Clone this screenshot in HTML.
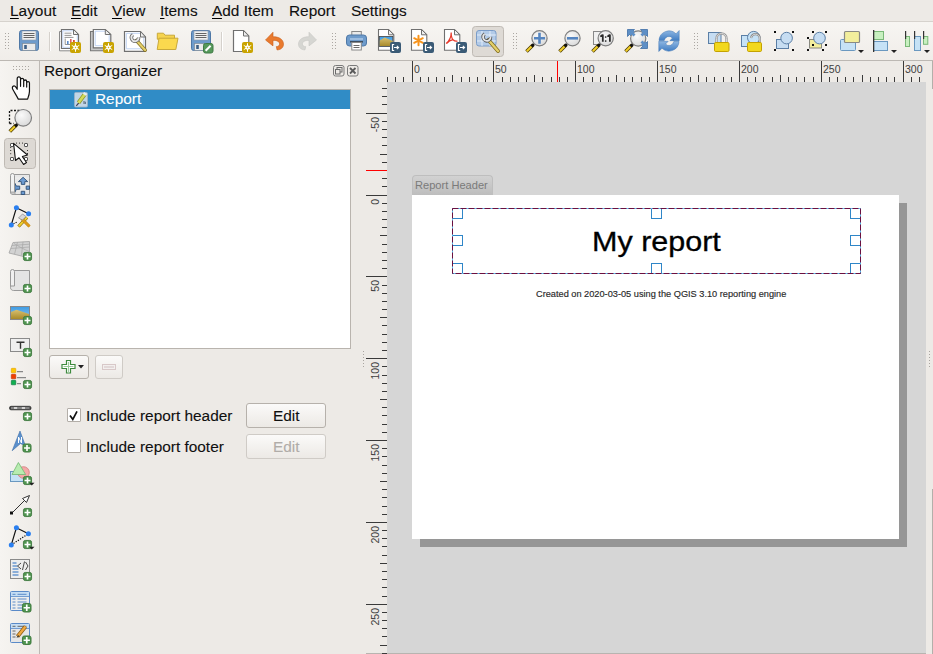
<!DOCTYPE html>
<html><head><meta charset="utf-8">
<style>
*{margin:0;padding:0;box-sizing:border-box}
html,body{width:933px;height:654px;overflow:hidden;background:#EDEAE6;font-family:"Liberation Sans",sans-serif;color:#1a1a1a}
.a{position:absolute}
#menubar{left:0;top:0;width:933px;height:21px;background:#EDEAE6}
#menuline{left:0;top:21px;width:933px;height:1px;background:#D6D2CD}
#toolbar{left:0;top:22px;width:933px;height:38px;background:linear-gradient(#F7F5F2,#F0EDE9)}
#tbline{left:0;top:60px;width:933px;height:1px;background:#BCB8B3}
.t{position:absolute;white-space:nowrap;font-size:14px;line-height:16px;transform-origin:0 0;transform:scaleX(1.10);color:#101010;-webkit-text-stroke:0.1px currentColor}
.menu{top:3px}
.menu u{text-decoration:none;display:inline-block;line-height:12.5px;border-bottom:1.6px solid #000}
.ico{position:absolute}
.grip{position:absolute;width:5px;background-image:radial-gradient(circle,#B8B4AE 0.8px,transparent 1px);background-size:3px 3px}
.sep{position:absolute;width:1px;background:#D8D4CF}
#lefttb{left:0;top:61px;width:39px;height:593px;background:linear-gradient(to right,#F6F4F1,#EEEBE7)}
#leftline{left:39px;top:61px;width:1px;height:593px;background:#BDB9B4}
#dock{left:40px;top:61px;width:325px;height:593px;background:#EDEAE6}
#tree{left:49px;top:89px;width:302px;height:260px;background:#fff;border:1px solid #B9B4AE}
#sel{left:50px;top:90px;width:300px;height:19px;background:#308CC6}
.btn{position:absolute;border:1px solid #B6B1AB;border-radius:3px;background:linear-gradient(#FBFAF9,#ECE9E5);}

#hruler{left:365px;top:61px;width:568px;height:21px;background:#EDEAE6}
#vruler{left:365px;top:82px;width:22px;height:572px;background:#EDEAE6}
#canvas{left:387px;top:82px;width:539px;height:572px;background:#D6D6D6;overflow:hidden}
#rstrip{left:926px;top:82px;width:7px;height:572px;background:#EDEAE6}
.rt{position:absolute;font-size:10.5px;line-height:11px;color:#3c3c3c}
</style></head>
<body>
<div id="menubar" class="a"></div>
<div id="menuline" class="a"></div>
<div class="t menu" style="left:10px"><u>L</u>ayout</div>
<div class="t menu" style="left:71px"><u>E</u>dit</div>
<div class="t menu" style="left:112px"><u>V</u>iew</div>
<div class="t menu" style="left:160px"><u>I</u>tems</div>
<div class="t menu" style="left:212px"><u>A</u>dd Item</div>
<div class="t menu" style="left:289px">Report</div>
<div class="t menu" style="left:351px">Settings</div>

<div id="toolbar" class="a"></div>
<div id="tbline" class="a"></div>

<div id="lefttb" class="a"></div>
<div id="leftline" class="a"></div>

<div id="dock" class="a"></div>
<div class="t" style="left:44px;top:63px">Report Organizer</div>
<div id="tree" class="a"></div>
<div id="sel" class="a"></div>
<div class="t" style="left:95px;top:91px;color:#fff">Report</div>

<div class="btn" style="left:49px;top:355px;width:40px;height:24px"></div>
<div class="btn" style="left:95px;top:355px;width:28px;height:24px;border-color:#CFCBC6"></div>

<div class="a" style="left:67px;top:408px;width:14px;height:14px;background:#fff;border:1px solid #B3AEA8;border-radius:1px"></div>
<div class="t" style="left:86px;top:408px">Include report header</div>
<div class="btn" style="left:246px;top:403px;width:80px;height:25px"></div>
<div class="t" style="left:273px;top:408px">Edit</div>
<div class="a" style="left:67px;top:439px;width:14px;height:14px;background:#fff;border:1px solid #B3AEA8;border-radius:1px"></div>
<div class="t" style="left:86px;top:439px">Include report footer</div>
<div class="btn" style="left:246px;top:434px;width:80px;height:25px;border-color:#CFCBC6"></div>
<div class="t" style="left:273px;top:439px;color:#B0ACA8">Edit</div>

<div id="hruler" class="a"></div>
<div id="vruler" class="a"></div>
<div id="canvas" class="a"></div>
<div id="rstrip" class="a"></div>
<div class="a" style="left:366px;top:653px;width:560px;height:1px;background:#B8B4B0"></div>
<div class="a" style="left:932px;top:61px;width:1px;height:28px;background:#B3AFAA"></div>
<div class="a" style="left:932px;top:489px;width:1px;height:165px;background:#B3AFAA"></div>
<svg class="a" style="left:0;top:0" width="933" height="654"><g fill="#A9A5A0">
<rect x="363" y="351" width="1" height="1"/><rect x="363" y="354" width="1" height="1"/><rect x="363" y="357" width="1" height="1"/><rect x="363" y="360" width="1" height="1"/><rect x="363" y="363" width="1" height="1"/><rect x="363" y="366" width="1" height="1"/>
<rect x="929" y="351" width="1" height="1"/><rect x="929" y="354" width="1" height="1"/><rect x="929" y="357" width="1" height="1"/><rect x="929" y="360" width="1" height="1"/><rect x="929" y="363" width="1" height="1"/><rect x="929" y="366" width="1" height="1"/>
</g></svg>
<svg class="a" style="left:365px;top:61px" width="568" height="21"><g stroke="#3a3a3a" stroke-width="1"><line x1="22.5" y1="16" x2="22.5" y2="21"/><line x1="30.5" y1="16" x2="30.5" y2="21"/><line x1="38.5" y1="16" x2="38.5" y2="21"/><line x1="47.5" y1="0" x2="47.5" y2="21"/><line x1="55.5" y1="16" x2="55.5" y2="21"/><line x1="63.5" y1="16" x2="63.5" y2="21"/><line x1="71.5" y1="16" x2="71.5" y2="21"/><line x1="79.5" y1="16" x2="79.5" y2="21"/><line x1="87.5" y1="14" x2="87.5" y2="21"/><line x1="96.5" y1="16" x2="96.5" y2="21"/><line x1="104.5" y1="16" x2="104.5" y2="21"/><line x1="112.5" y1="16" x2="112.5" y2="21"/><line x1="120.5" y1="16" x2="120.5" y2="21"/><line x1="128.5" y1="0" x2="128.5" y2="21"/><line x1="137.5" y1="16" x2="137.5" y2="21"/><line x1="145.5" y1="16" x2="145.5" y2="21"/><line x1="153.5" y1="16" x2="153.5" y2="21"/><line x1="161.5" y1="16" x2="161.5" y2="21"/><line x1="169.5" y1="14" x2="169.5" y2="21"/><line x1="177.5" y1="16" x2="177.5" y2="21"/><line x1="186.5" y1="16" x2="186.5" y2="21"/><line x1="194.5" y1="16" x2="194.5" y2="21"/><line x1="202.5" y1="16" x2="202.5" y2="21"/><line x1="210.5" y1="0" x2="210.5" y2="21"/><line x1="218.5" y1="16" x2="218.5" y2="21"/><line x1="227.5" y1="16" x2="227.5" y2="21"/><line x1="235.5" y1="16" x2="235.5" y2="21"/><line x1="243.5" y1="16" x2="243.5" y2="21"/><line x1="251.5" y1="14" x2="251.5" y2="21"/><line x1="259.5" y1="16" x2="259.5" y2="21"/><line x1="267.5" y1="16" x2="267.5" y2="21"/><line x1="276.5" y1="16" x2="276.5" y2="21"/><line x1="284.5" y1="16" x2="284.5" y2="21"/><line x1="292.5" y1="0" x2="292.5" y2="21"/><line x1="300.5" y1="16" x2="300.5" y2="21"/><line x1="308.5" y1="16" x2="308.5" y2="21"/><line x1="317.5" y1="16" x2="317.5" y2="21"/><line x1="325.5" y1="16" x2="325.5" y2="21"/><line x1="333.5" y1="14" x2="333.5" y2="21"/><line x1="341.5" y1="16" x2="341.5" y2="21"/><line x1="349.5" y1="16" x2="349.5" y2="21"/><line x1="358.5" y1="16" x2="358.5" y2="21"/><line x1="366.5" y1="16" x2="366.5" y2="21"/><line x1="374.5" y1="0" x2="374.5" y2="21"/><line x1="382.5" y1="16" x2="382.5" y2="21"/><line x1="390.5" y1="16" x2="390.5" y2="21"/><line x1="398.5" y1="16" x2="398.5" y2="21"/><line x1="407.5" y1="16" x2="407.5" y2="21"/><line x1="415.5" y1="14" x2="415.5" y2="21"/><line x1="423.5" y1="16" x2="423.5" y2="21"/><line x1="431.5" y1="16" x2="431.5" y2="21"/><line x1="439.5" y1="16" x2="439.5" y2="21"/><line x1="448.5" y1="16" x2="448.5" y2="21"/><line x1="456.5" y1="0" x2="456.5" y2="21"/><line x1="464.5" y1="16" x2="464.5" y2="21"/><line x1="472.5" y1="16" x2="472.5" y2="21"/><line x1="480.5" y1="16" x2="480.5" y2="21"/><line x1="488.5" y1="16" x2="488.5" y2="21"/><line x1="497.5" y1="14" x2="497.5" y2="21"/><line x1="505.5" y1="16" x2="505.5" y2="21"/><line x1="513.5" y1="16" x2="513.5" y2="21"/><line x1="521.5" y1="16" x2="521.5" y2="21"/><line x1="529.5" y1="16" x2="529.5" y2="21"/><line x1="538.5" y1="0" x2="538.5" y2="21"/><line x1="546.5" y1="16" x2="546.5" y2="21"/><line x1="554.5" y1="16" x2="554.5" y2="21"/></g><g fill="#404040" font-size="10.5" font-family="Liberation Sans"><text x="49.0" y="11.5">0</text><text x="130.0" y="11.5">50</text><text x="212.0" y="11.5">100</text><text x="294.0" y="11.5">150</text><text x="376.0" y="11.5">200</text><text x="458.0" y="11.5">250</text><text x="540.0" y="11.5">300</text></g><line x1="192.5" y1="0" x2="192.5" y2="21" stroke="#FF0000"/></svg>
<svg class="a" style="left:365px;top:82px" width="23" height="572"><g stroke="#3a3a3a" stroke-width="1"><line x1="17" y1="6.5" x2="22" y2="6.5"/><line x1="17" y1="14.5" x2="22" y2="14.5"/><line x1="17" y1="22.5" x2="22" y2="22.5"/><line x1="1" y1="31.5" x2="22" y2="31.5"/><line x1="17" y1="39.5" x2="22" y2="39.5"/><line x1="17" y1="47.5" x2="22" y2="47.5"/><line x1="17" y1="55.5" x2="22" y2="55.5"/><line x1="17" y1="63.5" x2="22" y2="63.5"/><line x1="15" y1="72.5" x2="22" y2="72.5"/><line x1="17" y1="80.5" x2="22" y2="80.5"/><line x1="17" y1="88.5" x2="22" y2="88.5"/><line x1="17" y1="96.5" x2="22" y2="96.5"/><line x1="17" y1="104.5" x2="22" y2="104.5"/><line x1="1" y1="113.5" x2="22" y2="113.5"/><line x1="17" y1="121.5" x2="22" y2="121.5"/><line x1="17" y1="129.5" x2="22" y2="129.5"/><line x1="17" y1="137.5" x2="22" y2="137.5"/><line x1="17" y1="145.5" x2="22" y2="145.5"/><line x1="15" y1="153.5" x2="22" y2="153.5"/><line x1="17" y1="162.5" x2="22" y2="162.5"/><line x1="17" y1="170.5" x2="22" y2="170.5"/><line x1="17" y1="178.5" x2="22" y2="178.5"/><line x1="17" y1="186.5" x2="22" y2="186.5"/><line x1="1" y1="194.5" x2="22" y2="194.5"/><line x1="17" y1="203.5" x2="22" y2="203.5"/><line x1="17" y1="211.5" x2="22" y2="211.5"/><line x1="17" y1="219.5" x2="22" y2="219.5"/><line x1="17" y1="227.5" x2="22" y2="227.5"/><line x1="15" y1="235.5" x2="22" y2="235.5"/><line x1="17" y1="243.5" x2="22" y2="243.5"/><line x1="17" y1="252.5" x2="22" y2="252.5"/><line x1="17" y1="260.5" x2="22" y2="260.5"/><line x1="17" y1="268.5" x2="22" y2="268.5"/><line x1="1" y1="276.5" x2="22" y2="276.5"/><line x1="17" y1="284.5" x2="22" y2="284.5"/><line x1="17" y1="293.5" x2="22" y2="293.5"/><line x1="17" y1="301.5" x2="22" y2="301.5"/><line x1="17" y1="309.5" x2="22" y2="309.5"/><line x1="15" y1="317.5" x2="22" y2="317.5"/><line x1="17" y1="325.5" x2="22" y2="325.5"/><line x1="17" y1="333.5" x2="22" y2="333.5"/><line x1="17" y1="342.5" x2="22" y2="342.5"/><line x1="17" y1="350.5" x2="22" y2="350.5"/><line x1="1" y1="358.5" x2="22" y2="358.5"/><line x1="17" y1="366.5" x2="22" y2="366.5"/><line x1="17" y1="374.5" x2="22" y2="374.5"/><line x1="17" y1="383.5" x2="22" y2="383.5"/><line x1="17" y1="391.5" x2="22" y2="391.5"/><line x1="15" y1="399.5" x2="22" y2="399.5"/><line x1="17" y1="407.5" x2="22" y2="407.5"/><line x1="17" y1="415.5" x2="22" y2="415.5"/><line x1="17" y1="424.5" x2="22" y2="424.5"/><line x1="17" y1="432.5" x2="22" y2="432.5"/><line x1="1" y1="440.5" x2="22" y2="440.5"/><line x1="17" y1="448.5" x2="22" y2="448.5"/><line x1="17" y1="456.5" x2="22" y2="456.5"/><line x1="17" y1="464.5" x2="22" y2="464.5"/><line x1="17" y1="473.5" x2="22" y2="473.5"/><line x1="15" y1="481.5" x2="22" y2="481.5"/><line x1="17" y1="489.5" x2="22" y2="489.5"/><line x1="17" y1="497.5" x2="22" y2="497.5"/><line x1="17" y1="505.5" x2="22" y2="505.5"/><line x1="17" y1="514.5" x2="22" y2="514.5"/><line x1="1" y1="522.5" x2="22" y2="522.5"/><line x1="17" y1="530.5" x2="22" y2="530.5"/><line x1="17" y1="538.5" x2="22" y2="538.5"/><line x1="17" y1="546.5" x2="22" y2="546.5"/><line x1="17" y1="554.5" x2="22" y2="554.5"/><line x1="15" y1="563.5" x2="22" y2="563.5"/><line x1="17" y1="571.5" x2="22" y2="571.5"/></g><g fill="#404040" font-size="10.5" font-family="Liberation Sans"><text transform="translate(13.5,35.0) rotate(-90)" text-anchor="end">-50</text><text transform="translate(13.5,117.0) rotate(-90)" text-anchor="end">0</text><text transform="translate(13.5,198.0) rotate(-90)" text-anchor="end">50</text><text transform="translate(13.5,280.0) rotate(-90)" text-anchor="end">100</text><text transform="translate(13.5,362.0) rotate(-90)" text-anchor="end">150</text><text transform="translate(13.5,444.0) rotate(-90)" text-anchor="end">200</text><text transform="translate(13.5,526.0) rotate(-90)" text-anchor="end">250</text></g><line x1="1" y1="88.5" x2="22" y2="88.5" stroke="#FF0000"/></svg>

<div class="a" style="left:420px;top:203px;width:487px;height:344px;background:#969696"></div>
<div class="a" style="left:412px;top:195px;width:487px;height:344px;background:#fff"></div>
<div class="a" style="left:412px;top:175px;width:81px;height:20px;border-radius:4px 4px 0 0;background:linear-gradient(#D2D2D2,#BDBDBD);border:1px solid #BEBEBE;border-bottom:none"></div>
<div class="a" style="left:415px;top:178px;font-size:11.1px;line-height:14px;color:#7a7a7a;white-space:nowrap">Report Header</div>
<svg class="a" style="left:440px;top:195px" width="440" height="100">
<g fill="none" stroke="#2F86C8" stroke-width="1">
<rect x="12.5" y="13.5" width="10" height="10"/>
<rect x="211.5" y="13.5" width="10" height="10"/>
<rect x="410.5" y="13.5" width="10" height="10"/>
<rect x="12.5" y="40.5" width="10" height="10"/>
<rect x="410.5" y="40.5" width="10" height="10"/>
<rect x="12.5" y="68.5" width="10" height="10"/>
<rect x="211.5" y="68.5" width="10" height="10"/>
<rect x="410.5" y="68.5" width="10" height="10"/>
</g>
<rect x="12.5" y="13.5" width="408" height="65" fill="none" stroke="#5FC3F0" stroke-width="1"/>
<rect x="12.5" y="13.5" width="408" height="65" fill="none" stroke="#6B1040" stroke-width="1" stroke-dasharray="6 2"/>

</svg>
<div class="a" style="left:592px;top:226px;font-size:27px;line-height:32px;transform-origin:0 0;transform:scaleX(1.13);-webkit-text-stroke:0.3px #000;color:#000;white-space:nowrap">My report</div>
<div class="a" style="left:536px;top:289px;font-size:8.7px;line-height:11px;transform-origin:0 0;transform:scaleX(1.06);-webkit-text-stroke:0.15px #2a2a2a;color:#2a2a2a;white-space:nowrap">Created on 2020-03-05 using the QGIS 3.10 reporting engine</div>

<svg class="a" style="left:0;top:0" width="933" height="654">
<defs>
<symbol id="gold" viewBox="0 0 11 11" overflow="visible">
<rect x="0" y="0" width="11" height="11" rx="2" fill="#C9A300"/>
<g stroke="#fff" stroke-width="1" stroke-linecap="round"><line x1="5.5" y1="1.6" x2="5.5" y2="9.4"/><line x1="2.1" y1="3.6" x2="8.9" y2="7.4"/><line x1="2.1" y1="7.4" x2="8.9" y2="3.6"/></g>
<path d="M5.5 3.1l2.1 1.2v2.4l-2.1 1.2-2.1-1.2V4.3z" fill="#fff"/><path d="M5.5 4.6l0.9 0.9-0.9 0.9-0.9-0.9z" fill="#D8B820"/>
</symbol>
<symbol id="plus" viewBox="0 0 10 10" overflow="visible">
<rect x="0.5" y="0.5" width="9" height="9" rx="2" fill="#4F944F" stroke="#3D783D" stroke-width="1"/>
<path d="M5 1.7v6.6M1.7 5h6.6" stroke="#fff" stroke-width="1.8"/>
</symbol>
<symbol id="exp" viewBox="0 0 11 11" overflow="visible">
<rect x="0" y="0" width="11" height="11" rx="2" fill="#3B5B76"/>
<path d="M4.2 2.5H2.5v6h1.7" stroke="#fff" stroke-width="1.2" fill="none"/><path d="M4 5.5h4.5M6.8 3.8l1.8 1.7-1.8 1.7" stroke="#fff" stroke-width="1.1" fill="none"/>
</symbol>
<symbol id="floppy" viewBox="0 0 20 21" overflow="visible">
<rect x="0.5" y="0.5" width="19" height="20" rx="2.2" fill="#6E9BCB" stroke="#4F78A6" stroke-width="1"/>
<rect x="3" y="1" width="14" height="9" fill="#F0F0F0" stroke="#8A99AA" stroke-width="0.6"/>
<path d="M4.5 3.5h11M4.5 5.5h11M4.5 7.5h11" stroke="#555" stroke-width="0.9"/>
<rect x="3.5" y="13.5" width="13" height="7" fill="#EAEAEA" stroke="#7F8C99" stroke-width="0.7"/>
<rect x="5.2" y="15" width="2.6" height="4" fill="#3D5F85"/>
</symbol>
<symbol id="dropar" viewBox="0 0 6 3" overflow="visible"><path d="M0 0h6L3 3z" fill="#222"/></symbol>
</defs>

<!-- grips -->
<g fill="#ABA7A2">
<rect x="5" y="33" width="1" height="1"/><rect x="8" y="33" width="1" height="1"/><rect x="5" y="36" width="1" height="1"/><rect x="8" y="36" width="1" height="1"/><rect x="5" y="39" width="1" height="1"/><rect x="8" y="39" width="1" height="1"/><rect x="5" y="42" width="1" height="1"/><rect x="8" y="42" width="1" height="1"/><rect x="5" y="45" width="1" height="1"/><rect x="8" y="45" width="1" height="1"/><rect x="5" y="48" width="1" height="1"/><rect x="8" y="48" width="1" height="1"/>
</g>
<g fill="#ABA7A2" transform="translate(327,0)">
<rect x="5" y="33" width="1" height="1"/><rect x="8" y="33" width="1" height="1"/><rect x="5" y="36" width="1" height="1"/><rect x="8" y="36" width="1" height="1"/><rect x="5" y="39" width="1" height="1"/><rect x="8" y="39" width="1" height="1"/><rect x="5" y="42" width="1" height="1"/><rect x="8" y="42" width="1" height="1"/><rect x="5" y="45" width="1" height="1"/><rect x="8" y="45" width="1" height="1"/><rect x="5" y="48" width="1" height="1"/><rect x="8" y="48" width="1" height="1"/>
</g>
<g fill="#ABA7A2" transform="translate(508,0)">
<rect x="5" y="33" width="1" height="1"/><rect x="8" y="33" width="1" height="1"/><rect x="5" y="36" width="1" height="1"/><rect x="8" y="36" width="1" height="1"/><rect x="5" y="39" width="1" height="1"/><rect x="8" y="39" width="1" height="1"/><rect x="5" y="42" width="1" height="1"/><rect x="8" y="42" width="1" height="1"/><rect x="5" y="45" width="1" height="1"/><rect x="8" y="45" width="1" height="1"/><rect x="5" y="48" width="1" height="1"/><rect x="8" y="48" width="1" height="1"/>
</g>
<g fill="#ABA7A2" transform="translate(689,0)">
<rect x="5" y="33" width="1" height="1"/><rect x="8" y="33" width="1" height="1"/><rect x="5" y="36" width="1" height="1"/><rect x="8" y="36" width="1" height="1"/><rect x="5" y="39" width="1" height="1"/><rect x="8" y="39" width="1" height="1"/><rect x="5" y="42" width="1" height="1"/><rect x="8" y="42" width="1" height="1"/><rect x="5" y="45" width="1" height="1"/><rect x="8" y="45" width="1" height="1"/><rect x="5" y="48" width="1" height="1"/><rect x="8" y="48" width="1" height="1"/>
</g>
<g fill="#ABA7A2">
<rect x="13" y="66" width="1" height="1"/><rect x="16" y="66" width="1" height="1"/><rect x="19" y="66" width="1" height="1"/><rect x="22" y="66" width="1" height="1"/><rect x="25" y="66" width="1" height="1"/><rect x="28" y="66" width="1" height="1"/>
<rect x="13" y="69" width="1" height="1"/><rect x="16" y="69" width="1" height="1"/><rect x="19" y="69" width="1" height="1"/><rect x="22" y="69" width="1" height="1"/><rect x="25" y="69" width="1" height="1"/><rect x="28" y="69" width="1" height="1"/>
</g>
<!-- separators -->
<rect x="49" y="32" width="1" height="19" fill="#D5D1CC"/><rect x="50" y="32" width="1" height="19" fill="#FFFFFF"/>
<rect x="221" y="32" width="1" height="19" fill="#D5D1CC"/><rect x="222" y="32" width="1" height="19" fill="#FFFFFF"/>

<!-- save -->
<use href="#floppy" x="19" y="30" width="20" height="21"/>

<!-- new report -->
<g transform="translate(59,29)">
<path d="M0.5 2.5h14v19.3h-14z" fill="#fff" stroke="#8a8a8a" stroke-width="1"/>
<path d="M2.5 0.5h12l5 5v14h-17z" fill="#fff" stroke="#707070" stroke-width="1.2"/>
<path d="M3.8 1.8h10.5l4 4v12.5h-14.5z" fill="none" stroke="#B8CDF0" stroke-width="0.9"/>
<path d="M14.5 0.5v5h5z" fill="#eee" stroke="#707070" stroke-width="1" stroke-linejoin="round"/>
<path d="M5.5 4.2h7M5.5 6.4h7M5.5 8.4h9" stroke="#8a8a8a" stroke-width="0.9"/>
<path d="M6.2 9.5v6h8" stroke="#777" stroke-width="0.8" fill="none"/>
<rect x="8" y="12" width="1.6" height="3.3" fill="#5A8ACB"/><rect x="11" y="10" width="1.6" height="5.3" fill="#E06060"/><rect x="14" y="11" width="1.8" height="4.3" fill="#E05030"/>
</g>
<use href="#gold" x="70" y="42" width="11" height="11"/>
<!-- duplicate -->
<g transform="translate(90,29)">
<path d="M0.5 2.5h14v19.3h-14z" fill="#C8C8C8" stroke="#777" stroke-width="1.1"/>
<path d="M3.3 0.5h12l5.5 5v13.3h-17.5z" fill="#fff" stroke="#707070" stroke-width="1.2"/>
<path d="M5.2 2.2h9.8l4.2 4.2v10.3h-14z" fill="none" stroke="#B8CDF0" stroke-width="0.9"/>
<path d="M15.3 0.5v5h5.5z" fill="#eee" stroke="#707070" stroke-width="1" stroke-linejoin="round"/>
</g>
<use href="#gold" x="103" y="42" width="11" height="11"/>
<!-- layout manager -->
<g transform="translate(124,31)">
<path d="M0.5 0.5h16l5 5.5v14.3h-21z" fill="#fff" stroke="#707070" stroke-width="1.2"/>
<path d="M2.3 2.3h13.8l3.7 4v11.5h-17.5z" fill="none" stroke="#B8CDF0" stroke-width="0.9"/>
<path d="M16.5 0.5v5.5h5z" fill="#eee" stroke="#707070" stroke-width="1" stroke-linejoin="round"/>
<path d="M12.5 9.5l8.6 9.6" stroke="#7F6A1A" stroke-width="3.6" stroke-linecap="round"/><path d="M12.5 9.5l8.6 9.6" stroke="#E3CF6A" stroke-width="2.2" stroke-linecap="round"/>
<path d="M9 3.6A3.6 3.6 0 1 0 14.6 6.2" fill="none" stroke="#666" stroke-width="3.4"/><path d="M9 3.6A3.6 3.6 0 1 0 14.6 6.2" fill="none" stroke="#E6E6E6" stroke-width="1.8"/>
</g>
<!-- folder -->
<g transform="translate(156,32)">
<path d="M1.3 1.2h6.2l1.5 2h9.5v4H1.3z" fill="#F6D44F" stroke="#C9A93B" stroke-width="1"/>
<path d="M3 6.2h19l-2.2 11.3H1.2z" fill="#FBD94E" stroke="#C9A93B" stroke-width="1"/>
</g>
<!-- save as template -->
<use href="#floppy" x="191" y="30" width="20" height="21"/>
<g transform="translate(203,43)">
<rect x="0.5" y="0.5" width="9.5" height="9.5" rx="2" fill="#55985A" stroke="#3F7A44"/>
<path d="M2.6 7.8l5-5" stroke="#fff" stroke-width="2"/>
</g>
<!-- new page -->
<g transform="translate(233,30)">
<path d="M0.5 0.5h10l5.3 5.5v15.5h-15.3z" fill="#fff" stroke="#707070" stroke-width="1.2"/>
<path d="M10.5 0.5v5.5h5.3z" fill="#eee" stroke="#707070" stroke-width="1" stroke-linejoin="round"/>
</g>
<use href="#gold" x="242" y="42" width="11" height="11"/>
<!-- undo -->
<path d="M265.5 40l7.5-7.8v4.6c5.5-0.3 10.5 2.4 10.5 7.4 0 3.4-2.8 5.7-6.5 5.7l-0.7-3.3c2.1 0 3.3-1.1 3.3-2.6 0-2.5-3-3.8-6.6-3.6v5.5z" fill="#E97A2E" stroke="#C85E1A" stroke-width="0.6"/>
<!-- redo -->
<path d="M316.5 40l-7.5-7.8v4.6c-5.5-0.3-10.5 2.4-10.5 7.4 0 3.4 2.8 5.7 6.5 5.7l0.7-3.3c-2.1 0-3.3-1.1-3.3-2.6 0-2.5 3-3.8 6.6-3.6v5.5z" fill="#D6D6D2" stroke="#C8C8C4" stroke-width="0.6"/>
<!-- print -->
<g transform="translate(346,31)">
<rect x="5.8" y="0.5" width="9.5" height="6.5" fill="#EAEAEA" stroke="#888" stroke-width="1"/>
<rect x="0.5" y="4" width="20" height="11" rx="3" fill="#6E9BCB" stroke="#4F78A6" stroke-width="1"/>
<rect x="4" y="7" width="13" height="2" fill="#9DBDE0"/>
<rect x="4" y="10" width="13" height="1.6" fill="#3E4E60"/>
<rect x="5.8" y="11.5" width="9.5" height="7.5" fill="#fff" stroke="#888" stroke-width="1"/>
<path d="M7.5 14.5h6M7.5 16.5h6" stroke="#6A6A6A" stroke-width="1"/>
</g>
<!-- export image -->
<g transform="translate(378,29)">
<path d="M0.5 0.5h10l5.3 5.3v15.5h-15.3z" fill="#fff" stroke="#707070" stroke-width="1.1"/>
<path d="M10.5 0.5v5.3h5.3z" fill="#eee" stroke="#707070" stroke-width="1" stroke-linejoin="round"/>
<defs><linearGradient id="sky" x1="0" y1="0" x2="0" y2="1"><stop offset="0" stop-color="#3D9BE3"/><stop offset="1" stop-color="#8FC4EE"/></linearGradient><linearGradient id="hill" x1="0" y1="0" x2="0" y2="1"><stop offset="0" stop-color="#D8C070"/><stop offset="1" stop-color="#A88A2A"/></linearGradient></defs>
<rect x="1.3" y="7.5" width="13.5" height="10" fill="url(#sky)" stroke="#444" stroke-width="0.8"/>
<path d="M1.7 11.5l5-3 8 3.5v5.1h-13z" fill="url(#hill)"/>
</g>
<use href="#exp" x="390" y="42" width="11" height="11"/>
<!-- export svg -->
<g transform="translate(411,29)">
<path d="M0.5 0.5h10l5.3 5.3v15.5h-15.3z" fill="#fff" stroke="#707070" stroke-width="1.1"/>
<path d="M10.5 0.5v5.3h5.3z" fill="#eee" stroke="#707070" stroke-width="1" stroke-linejoin="round"/>
<g stroke="#F7941D" stroke-width="2" stroke-linecap="round"><path d="M7.5 6.8v9.4M3.2 9.2l8.6 4.6M3.2 13.8l8.6-4.6"/></g>
</g>
<use href="#exp" x="423" y="42" width="11" height="11"/>
<!-- export pdf -->
<g transform="translate(444,29)">
<path d="M0.5 0.5h10l5.3 5.3v15.5h-15.3z" fill="#fff" stroke="#707070" stroke-width="1.1"/>
<path d="M10.5 0.5v5.3h5.3z" fill="#eee" stroke="#707070" stroke-width="1" stroke-linejoin="round"/>
<path d="M7.2 3.5c0 4 0.5 6 1.8 7.2 1.2 1.1 3.5 1.6 4.5 1.3M7.2 3.5c0 4-2 8.5-5 11M9 10.7c-2 0.3-4 1-6.5 4" fill="none" stroke="#E8382A" stroke-width="1.2"/>
</g>
<use href="#exp" x="456" y="42" width="11" height="11"/>
<!-- pressed atlas button -->
<rect x="472.5" y="26.5" width="31" height="30" rx="3" fill="#DEDAD5" stroke="#BFBAB4"/>
<g transform="translate(476,30)">
<rect x="0.5" y="0.5" width="19.5" height="15.5" rx="2.5" fill="#B3CBE8" stroke="#7A9CC8"/>
<path d="M1 5h19M1 11h19M6 1v15M14 1v15" stroke="#E8F0FA" stroke-width="0.9"/>
<path d="M12.5 10l9.5 11" stroke="#7F6A1A" stroke-width="3.8" stroke-linecap="round"/><path d="M12.5 10l9.5 11" stroke="#E3CF6A" stroke-width="2.4" stroke-linecap="round"/>
<path d="M8.6 4A3.8 3.8 0 1 0 14.6 6.8" fill="none" stroke="#555" stroke-width="3.4"/><path d="M8.6 4A3.8 3.8 0 1 0 14.6 6.8" fill="none" stroke="#E6E6E6" stroke-width="1.8"/>
</g>

<!-- zoom in/out/1:1 -->
<defs><radialGradient id="lens" cx="0.4" cy="0.35" r="0.7"><stop offset="0" stop-color="#FAFAFA"/><stop offset="1" stop-color="#D8D8D8"/></radialGradient></defs>
<g id="zin">
<path d="M526.5 51.5l6.5-6.5" stroke="#4a3a00" stroke-width="3.6" stroke-linecap="butt"/>
<path d="M526.8 51.2l6.2-6.2" stroke="#F2CF2A" stroke-width="2"/>
<path d="M531.5 46.5l2.5-2.5" stroke="#111" stroke-width="2.6"/>
<circle cx="539.5" cy="38.3" r="7.6" fill="url(#lens)" stroke="#7E7E7E" stroke-width="1.2"/>
<path d="M534 38.3h11M539.5 32.8v11" stroke="#5585C0" stroke-width="2.6"/>
</g>
<g>
<path d="M559.5 51.5l6.5-6.5" stroke="#4a3a00" stroke-width="3.6"/>
<path d="M559.8 51.2l6.2-6.2" stroke="#F2CF2A" stroke-width="2"/>
<path d="M564.5 46.5l2.5-2.5" stroke="#111" stroke-width="2.6"/>
<circle cx="572.5" cy="38.3" r="7.6" fill="url(#lens)" stroke="#7E7E7E" stroke-width="1.2"/>
<path d="M567 38.3h11" stroke="#5585C0" stroke-width="2.6"/>
</g>
<g>
<rect x="593.5" y="31.5" width="9" height="13" fill="#F0F0F0" stroke="#888" stroke-width="1"/>
<path d="M592.5 51.5l6.5-6.5" stroke="#4a3a00" stroke-width="3.6"/>
<path d="M592.8 51.2l6.2-6.2" stroke="#F2CF2A" stroke-width="2"/>
<path d="M597.5 46.5l2.5-2.5" stroke="#111" stroke-width="2.6"/>
<circle cx="605.7" cy="38.3" r="7.6" fill="url(#lens)" stroke="#7E7E7E" stroke-width="1.2"/>
<path d="M602.8 34.6v7.2M600.3 36.6l2.5-2M609.9 34.6v7.2M607.4 36.6l2.5-2" stroke="#2a2a2a" stroke-width="1.8" fill="none"/><rect x="604.9" y="36.3" width="1.5" height="1.5" fill="#2a2a2a"/><rect x="604.9" y="40.3" width="1.5" height="1.5" fill="#2a2a2a"/>
</g>
<!-- zoom full -->
<g>
<path d="M627.5 29.5h7l-2 2 3 3-3 3-3-3-2 2z" fill="#5E8FC6" stroke="#3F6FA6" stroke-width="0.8"/>
<path d="M647.5 29.5h-7l2 2-3 3 3 3 3-3 2 2z" fill="#5E8FC6" stroke="#3F6FA6" stroke-width="0.8"/>
<path d="M647.5 48.5h-7l2-2-3-3 3-3 3 3 2-2z" fill="#5E8FC6" stroke="#3F6FA6" stroke-width="0.8"/>
<path d="M625.5 51.5l6.5-6.5" stroke="#4a3a00" stroke-width="3.6"/>
<path d="M625.8 51.2l6.2-6.2" stroke="#F2CF2A" stroke-width="2"/>
<path d="M630.5 46.5l2.5-2.5" stroke="#111" stroke-width="2.6"/>
<circle cx="638.2" cy="38.5" r="7.6" fill="url(#lens)" stroke="#7E7E7E" stroke-width="1.2"/>
<path d="M630 31h5l-1.5 1.5 2 2-2 2-2-2-1.5 1.5z" fill="#5E8FC6"/>
<path d="M646 31h-5l1.5 1.5-2 2 2 2 2-2 1.5 1.5z" fill="#5E8FC6"/>
<path d="M646 46h-5l1.5-1.5-2-2 2-2 2 2 1.5-1.5z" fill="#5E8FC6"/>
</g>
<!-- refresh -->
<defs><linearGradient id="rfg" x1="0" y1="0" x2="0" y2="1"><stop offset="0" stop-color="#8DB6E2"/><stop offset="1" stop-color="#3F7CC2"/></linearGradient></defs>
<g fill="url(#rfg)" stroke="#3C74B4" stroke-width="0.5" stroke-linejoin="round">
<path d="M659 40.5A10 10 0 0 1 676 33.8L679.2 30.5V40.7H669.8L672.5 38A4.8 4.8 0 0 0 664.2 40.5Z"/>
<path d="M679 41.5A10 10 0 0 1 662 48.2L658.8 51.5V41.3H668.2L665.5 44A4.8 4.8 0 0 0 673.8 41.5Z"/>
</g>
<!-- lock -->
<g>
<rect x="708.5" y="32.5" width="12.5" height="11" fill="#C6DDF2" stroke="#5B7FA6" stroke-width="1"/>
<path d="M716.5 43v-4.5a5 5 0 0 1 10 0V43" fill="none" stroke="#9A9A9A" stroke-width="2.4"/>
<path d="M716.5 43v-4.5a5 5 0 0 1 10 0V43" fill="none" stroke="#D8D8D8" stroke-width="1"/>
<rect x="714.5" y="42.5" width="14.5" height="9" rx="1.2" fill="#F2D81E" stroke="#C4A200" stroke-width="1"/>
</g>
<!-- unlock -->
<g>
<rect x="741.5" y="35.5" width="9" height="11" fill="#C6E2F6" stroke="#5B7FA6" stroke-width="1"/>
<circle cx="753.7" cy="37.6" r="6.2" fill="#C6E2F6" stroke="#5B7FA6" stroke-width="1"/>
<path d="M751 38c0.5-2.5 2.5-3.8 4.5-3.8 2.8 0 4.3 2.2 4.3 4.8v4" fill="none" stroke="#8A8A8A" stroke-width="2.2"/>
<path d="M751 38c0.5-2.5 2.5-3.8 4.5-3.8 2.8 0 4.3 2.2 4.3 4.8v4" fill="none" stroke="#E0E0E0" stroke-width="0.9"/>
<rect x="747.5" y="42.5" width="14" height="9" rx="1.2" fill="#F2D81E" stroke="#C4A200" stroke-width="1"/>
</g>
<!-- group -->
<g>
<rect x="776.5" y="39.5" width="12" height="9" fill="#C6DDF2" stroke="#5B7FA6" stroke-width="1"/>
<circle cx="786.6" cy="38.1" r="5.8" fill="#C6DDF2" stroke="#5B7FA6" stroke-width="1"/>
<g fill="#111"><rect x="774" y="31" width="2" height="2"/><rect x="792" y="31" width="2" height="2"/><rect x="774" y="49" width="2" height="2"/><rect x="792" y="49" width="2" height="2"/></g>
</g>
<!-- ungroup -->
<g>
<rect x="809.5" y="39.5" width="12" height="8.5" fill="#F2EE9C" stroke="#8A8A80" stroke-width="1"/>
<circle cx="819.5" cy="38.1" r="5.8" fill="#C6DDF2" stroke="#5B7FA6" stroke-width="1"/>
<g fill="#111"><rect x="812" y="31" width="2" height="2"/><rect x="825" y="31" width="2" height="2"/><rect x="807" y="37" width="2" height="2"/><rect x="812" y="44" width="2" height="2"/><rect x="825" y="44" width="2" height="2"/><rect x="807" y="49" width="2" height="2"/><rect x="822" y="49" width="2" height="2"/></g>
</g>
<!-- raise -->
<g>
<rect x="840.5" y="39.5" width="15" height="11" rx="1" fill="#C6E2F6" stroke="#6A98C0" stroke-width="1"/>
<rect x="844.5" y="31.5" width="15" height="11" rx="1" fill="#F2EE9C" stroke="#8A8A84" stroke-width="1.2"/>
<use href="#dropar" x="858" y="50" width="6" height="3"/>
</g>
<!-- align -->
<g>
<rect x="873.5" y="31.5" width="10" height="8" fill="#C8F0C0" stroke="#7AB878" stroke-width="1"/>
<rect x="873.5" y="41.5" width="14" height="9" fill="#C6E2F6" stroke="#6A98C0" stroke-width="1"/>
<rect x="873" y="30" width="1.3" height="22" fill="#333"/>
<use href="#dropar" x="891" y="50" width="6" height="3"/>
</g>
<!-- distribute -->
<g>
<rect x="905.5" y="36.5" width="4" height="10" fill="#C8F0C0" stroke="#7AB878" stroke-width="1"/>
<rect x="914.5" y="36.5" width="6" height="14" fill="#C6E2F6" stroke="#6A98C0" stroke-width="1"/>
<rect x="923.5" y="36.5" width="4.3" height="7.8" fill="#C8F0C0" stroke="#7AB878" stroke-width="1"/>
<rect x="905" y="31" width="1.2" height="8" fill="#333"/><rect x="914" y="31" width="1.2" height="8" fill="#333"/><rect x="923" y="31" width="1.2" height="8" fill="#333"/>
<use href="#dropar" x="924" y="50" width="6" height="3"/>
</g>

<!-- LEFT TOOLBAR -->
<!-- hand -->
<path transform="translate(1.1,0.6) scale(0.93,0.99)" d="M18.5 99.5c-1.5-3-4-6.5-6-10-0.8-1.4-0.3-2.8 0.8-3.2 1.1-0.4 2 0.3 2.8 1.4l1.2 1.8V79c0-1.3 0.8-2 1.8-2s1.8 0.7 1.8 2v7.5V80.3c0-1.2 0.8-1.8 1.7-1.8s1.7 0.6 1.7 1.8v6.5V81.8c0-1.1 0.8-1.6 1.6-1.6s1.6 0.5 1.6 1.6v5.5V83.3c0-1 0.7-1.5 1.5-1.5s1.5 0.5 1.5 1.5v8.5c0 2.5-0.8 4.5-2 7.7z" fill="#fff" stroke="#111" stroke-width="1.3" stroke-linejoin="round"/>
<!-- zoom tool -->
<path d="M9.5 123.5V110.5h12" fill="none" stroke="#111" stroke-width="1.3" stroke-dasharray="2 1.5"/>
<path d="M9.5 123.5h4" stroke="#111" stroke-width="1.3" stroke-dasharray="2 1.5"/>
<path d="M9.8 131.5l6.5-6.5" stroke="#4a3a00" stroke-width="3.6"/>
<path d="M10.1 131.2l6.2-6.2" stroke="#F2CF2A" stroke-width="2"/>
<path d="M15 126.5l2.8-2.8" stroke="#111" stroke-width="2.8"/>
<circle cx="23.2" cy="117.8" r="8.3" fill="url(#lens)" stroke="#7E7E7E" stroke-width="1.2"/>
<!-- select (pressed) -->
<rect x="4.5" y="138.5" width="31" height="30" rx="3" fill="#DDD9D4" stroke="#BFBAB4"/>
<g fill="#333"><rect x="16" y="142.6" width="1" height="1"/><rect x="19" y="142.6" width="1" height="1"/><rect x="22" y="142.6" width="1" height="1"/><rect x="10.2" y="147" width="1" height="1"/><rect x="10.2" y="150" width="1" height="1"/><rect x="10.2" y="153.2" width="1" height="1"/><rect x="27" y="150" width="1" height="1"/><rect x="27" y="153" width="1" height="1"/></g>
<g fill="#fff" stroke="#555" stroke-width="1"><rect x="10.5" y="143.5" width="3" height="3" rx="0.4"/><rect x="24.5" y="143.5" width="3" height="3" rx="0.4"/><rect x="10.5" y="157.5" width="3" height="3" rx="0.4"/><rect x="24.5" y="157.5" width="3" height="3" rx="0.4"/></g>
<path d="M13.6 143.4L27.5 155 22.4 156.6 26.5 162.5 23.6 164.5 19 157.8 15.5 160.5z" fill="#fff" stroke="#111" stroke-width="1.1" stroke-linejoin="round"/>
<!-- move content -->
<g>
<path d="M12.5 174.5h17v20h-17z" fill="#E8E8E8" stroke="#999" stroke-width="1"/>
<path d="M14.5 178l15 0M14.5 184l15 0" stroke="#F4F4F4" stroke-width="0.6"/>
<g fill="#6C9BD2" stroke="#2F4F75" stroke-width="0.9" stroke-linejoin="round">
<path d="M23.1 177.3l4.6 4.3h-2.9v2.8h-3.5v-2.8h-2.9z"/>
<path d="M14.8 183.2l1.6 2.9h3.3v3.2h-3.3l-1.6 2.9z"/>
<path d="M29.5 186.1h-3.3v3.2h3.3z"/>
<path d="M21.2 194.5v-3.2h3.5v3.2z"/>
</g>
<path d="M10.5 175.5a2 2 0 0 1 4 0v17.5h-4z" fill="#F2F2F2" stroke="#999" stroke-width="1"/>
<path d="M10.5 192c0 2 1 2.5 2.5 2.5h2v-2.5z" fill="#C8C8C8" stroke="#999" stroke-width="0.8"/>
</g>
<!-- edit nodes -->
<g>
<path d="M11.3 224.9L16.4 207.8 28.6 213.7" fill="none" stroke="#111" stroke-width="1.2"/>
<path d="M11.3 224.9l6-3" stroke="#111" stroke-width="1.1" stroke-dasharray="1.2 1.2"/>
<path d="M18.5 226.5l8.5-9" stroke="#7A5A00" stroke-width="3.2"/><path d="M18.7 226.3l8.3-8.8" stroke="#F0D030" stroke-width="2"/>
<path d="M21.5 218.5l8 8" stroke="#B5840A" stroke-width="3"/><path d="M21.7 218.7l7.8 7.8" stroke="#E09A1A" stroke-width="2"/>
<path d="M18.5 218l4-4 3.5 2.5-3.5 3.5z" fill="#D8D8D8" stroke="#888" stroke-width="0.7"/>
<circle cx="16.4" cy="207.8" r="2.5" fill="#2A7FF0"/><circle cx="28.6" cy="213.7" r="2.5" fill="#2A7FF0"/><circle cx="11.3" cy="224.9" r="2.5" fill="#2A7FF0"/>
</g>
<!-- 3d map (grayed) -->
<g>
<path d="M13 242.5l16.5-1v10l-6 5-14.5-3.5z" fill="#D2D2D2" stroke="#A8A8A8" stroke-width="0.9" stroke-linejoin="round"/>
<path d="M11 248.5l18.5-1.5M12 245.5l17.5-1.3M17.5 242.2l-3 12M23 241.8l-1.5 13.5M14 243.5c5 3 10 6 15.5 8" fill="none" stroke="#A8A8A8" stroke-width="0.7"/>
</g>
<use href="#plus" x="23" y="252" width="9" height="9"/>
<!-- add map -->
<g>
<path d="M12.5 270.5h17v20h-16c-1.5 0-3-1-3-3z" fill="#E4E4E4" stroke="#999" stroke-width="1"/>
<path d="M10.5 271.5a2 2 0 0 1 4 0v14.5h-4z" fill="#F0F0F0" stroke="#999" stroke-width="1"/>
</g>
<use href="#plus" x="23" y="284" width="9" height="9"/>
<!-- add picture -->
<g>
<rect x="10.5" y="306.5" width="19" height="13" fill="url(#sky)" stroke="#888" stroke-width="1"/>
<path d="M11 312l5.5-2.3 12.5 4.2v5.1H11z" fill="url(#hill)"/>
</g>
<use href="#plus" x="23" y="316" width="9" height="9"/>
<!-- add label -->
<g>
<rect x="10.5" y="338.5" width="19" height="13" fill="#EFEFEF" stroke="#8A8A8A" stroke-width="1"/>
<path d="M16.5 342.3h8M20.5 342.3v6.5" stroke="#333" stroke-width="1.4"/>
</g>
<use href="#plus" x="23" y="348" width="9" height="9"/>
<!-- legend -->
<g>
<rect x="11.3" y="368.3" width="4.5" height="4.5" rx="0.6" fill="#FFC800" stroke="#E0A000" stroke-width="0.6"/>
<rect x="11.3" y="374.3" width="4.5" height="4.5" rx="0.6" fill="#F04000" stroke="#C03000" stroke-width="0.6"/>
<rect x="11.3" y="380.3" width="4.5" height="4.5" rx="0.6" fill="#10B050" stroke="#08703A" stroke-width="0.6"/>
<path d="M17 371.7h6M17 377.7h9M17 383.7h4" stroke="#888" stroke-width="1.3"/>
</g>
<use href="#plus" x="23" y="380" width="9" height="9"/>
<!-- scalebar -->
<g>
<rect x="9.5" y="406.3" width="21.5" height="3.5" rx="1.5" fill="#444" stroke="#333" stroke-width="0.8"/>
<path d="M14 408h3.5M21.5 408h3.5" stroke="#fff" stroke-width="1.4"/>
<path d="M11 408h3M17.5 408h4M25 408h4.5" stroke="#999" stroke-width="1.4"/>
</g>
<use href="#plus" x="23" y="412" width="9" height="9"/>
<!-- north arrow -->
<g>
<path d="M20 431l5.5 15-5-2.5-8.3 7.2z" fill="#5A8FCC" stroke="#3F6FA6" stroke-width="0.6"/>
<path d="M18.5 443v-6l3 6v-6" fill="none" stroke="#fff" stroke-width="1"/>
</g>
<use href="#plus" x="22.5" y="443.5" width="9" height="9"/>
<!-- add shape -->
<g>
<rect x="10.5" y="471.5" width="13" height="10" fill="#C6E2F6" stroke="#6A98C0" stroke-width="1"/>
<circle cx="23.5" cy="472.5" r="5.8" fill="#F4A8A8" stroke="#D07878" stroke-width="0.8"/>
<path d="M18.4 462.5l7.2 12h-13.6z" fill="#B8ECB0" stroke="#70B870" stroke-width="0.8"/>
</g>
<use href="#plus" x="23" y="476" width="9" height="9"/>
<use href="#dropar" x="29" y="482.5" width="5.5" height="3"/>
<!-- add arrow -->
<g>
<path d="M12 513l15-15" stroke="#333" stroke-width="1"/>
<rect x="10" y="511.5" width="3" height="3" fill="#111"/>
<path d="M29.5 495.5l-3 7-4-4z" fill="#fff" stroke="#333" stroke-width="1" stroke-linejoin="round"/>
</g>
<use href="#plus" x="23" y="508" width="9" height="9"/>
<!-- add polygon -->
<g>
<path d="M11.3 544.9L16.4 527.8 28.4 533.7" fill="none" stroke="#111" stroke-width="1.2"/>
<path d="M11.3 544.9L28.4 533.7" fill="none" stroke="#111" stroke-width="1.2" stroke-dasharray="1.3 1.3"/>
<circle cx="16.4" cy="527.8" r="2.5" fill="#2A7FF0"/><circle cx="28.4" cy="533.7" r="2.5" fill="#2A7FF0"/><circle cx="11.3" cy="544.9" r="2.5" fill="#2A7FF0"/>
</g>
<use href="#plus" x="23" y="540" width="9" height="9"/>
<use href="#dropar" x="29" y="546.5" width="5.5" height="3"/>
<!-- add html -->
<g>
<rect x="10.5" y="559.5" width="19" height="19" fill="#EDEDED" stroke="#8A8A8A" stroke-width="1"/>
<path d="M12.5 563h4M12.5 566h5M12.5 569h6M12.5 572h6M12.5 575h6" stroke="#6A98D0" stroke-width="1.4"/>
<path d="M21 563l-3.5 3 3.5 3M25.5 562l2.5 4-2.5 4M24.5 561.5l-2 8.5" fill="none" stroke="#333" stroke-width="0.9"/>
</g>
<use href="#plus" x="23" y="572" width="9" height="9"/>
<!-- add table -->
<g>
<rect x="10.5" y="591.5" width="19" height="19" rx="1" fill="#EDEDED" stroke="#5A8AC8" stroke-width="1"/>
<rect x="11" y="592" width="18" height="4.5" fill="#C6DEF4"/>
<path d="M11 596.5h18" stroke="#5A8AC8" stroke-width="0.8"/>
<path d="M12.5 594.3h3M17.5 594.3h9M12.5 599h3M17.5 599h9M12.5 602h3M17.5 602h9M12.5 605h3M17.5 605h9M12.5 608h3M17.5 608h9" stroke="#5A8AC8" stroke-width="1"/>
</g>
<use href="#plus" x="22" y="603" width="9.5" height="9.5"/>
<!-- add fixed table -->
<g>
<rect x="10.5" y="623.5" width="19" height="19" rx="1" fill="#E6E6E6" stroke="#5A8AC8" stroke-width="1"/>
<rect x="11" y="624" width="18" height="4.5" fill="#C6DEF4"/>
<path d="M11 628.5h18" stroke="#5A8AC8" stroke-width="0.8"/>
<path d="M12.5 626.3h3M17.5 626.3h9M12.5 631h3M12.5 634h3M12.5 637h3" stroke="#666" stroke-width="1"/>
<path d="M17.5 636.5l8-10" stroke="#8A5A10" stroke-width="3.8"/>
<path d="M17.7 636.3l7.8-9.8" stroke="#F0A840" stroke-width="2.4"/>
<path d="M16.5 638l1.5-3 1.5 1.2z" fill="#333"/>
</g>
<use href="#plus" x="22" y="635.5" width="9.5" height="9.5"/>

<!-- dock title buttons -->
<rect x="333.5" y="65.5" width="10.5" height="10.5" rx="2" fill="none" stroke="#7A7A7A" stroke-width="1"/>
<rect x="337" y="67.5" width="5" height="4.5" fill="none" stroke="#6A6A6A" stroke-width="1"/>
<rect x="335.5" y="69.5" width="4.5" height="4.5" fill="#EDEAE6" stroke="#6A6A6A" stroke-width="1"/>
<rect x="347.5" y="65.5" width="10.5" height="10.5" rx="2" fill="none" stroke="#7A7A7A" stroke-width="1"/>
<path d="M350 68l5.5 5.5M355.5 68L350 73.5" stroke="#5A5A5A" stroke-width="1.8"/>
<!-- tree report icon -->
<rect x="74.5" y="92.5" width="13" height="14.5" rx="1.2" fill="#C2D5E6" stroke="#9DB2C6" stroke-width="0.8"/>
<path d="M84 104v-3M85.3 104v-2.3" stroke="#3A4A5A" stroke-width="0.8"/>
<path d="M76.3 105.8l2.5-3" stroke="#445" stroke-width="1.2"/>
<path d="M78.5 102.8l6.3-8.5" stroke="#8C9A28" stroke-width="4"/>
<path d="M78.5 102.8l6.3-8.5" stroke="#D4DA5A" stroke-width="2.6"/>
<path d="M84.3 94.8l1.3-1.8" stroke="#E8EEF2" stroke-width="3.6"/>
<!-- add (+) button icon -->
<path d="M66.5 360.5h4v4h4.5v4h-4.5v4.5h-4v-4.5h-4.5v-4h4.5z" fill="#fff" stroke="#3E8A3E" stroke-width="1.2"/>
<path d="M68.5 362v10M63.5 366.5h10" stroke="#5AAA5A" stroke-width="1" opacity="0.6"/>
<path d="M78 365h6l-3 3.5z" fill="#222"/>
<!-- remove (-) button icon -->
<rect x="102.5" y="364.5" width="13" height="5" fill="#F2EFEE" stroke="#D8C8C8" stroke-width="1"/>
<rect x="104" y="366.3" width="10" height="1.4" fill="#DCCFCF"/>
<!-- checkmark -->
<path d="M70 415.5l2.8 3.8 4.2-8" fill="none" stroke="#111" stroke-width="1.7" stroke-linejoin="miter"/>
</svg>


</body></html>
